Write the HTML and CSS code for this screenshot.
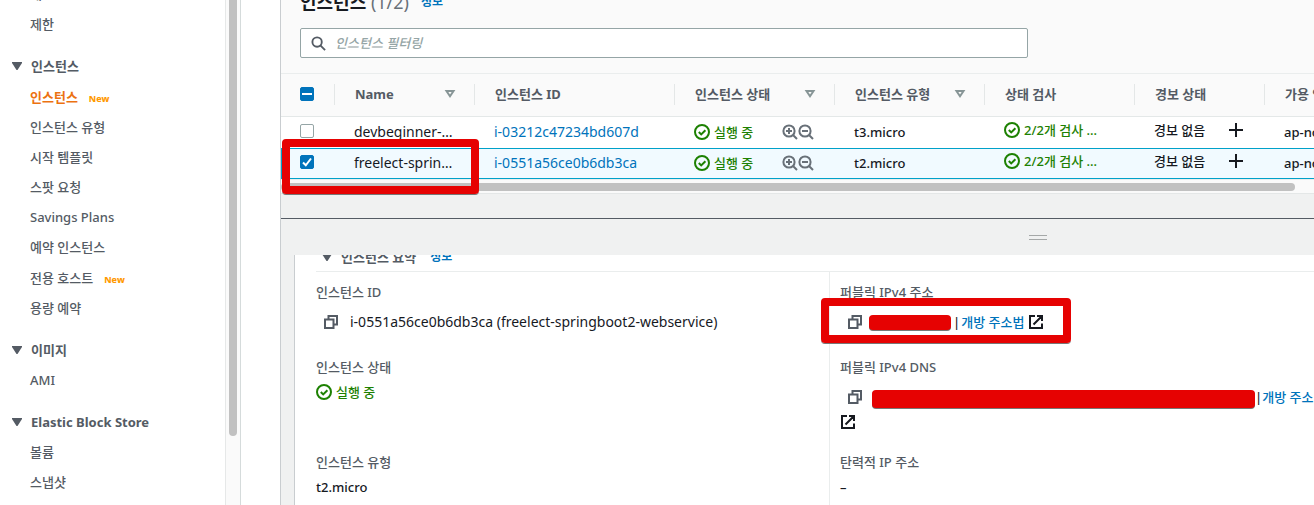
FILE: index.html
```html
<!DOCTYPE html>
<html lang="ko">
<head>
<meta charset="utf-8">
<title>인스턴스</title>
<link rel="stylesheet" href="styles.css">
</head>
<body>
<svg class="defs" aria-hidden="true">
  <symbol id="check" viewBox="0 0 16 16"><circle cx="8" cy="8" r="7"/><path d="M4.8 8l2.4 2.4 4.2-4.2"/></symbol>
  <symbol id="zoom-in" viewBox="0 0 16 16"><circle cx="7" cy="7" r="5.6"/><path d="M11 11l4 4M4 7h6M7 4v6"/></symbol>
  <symbol id="zoom-out" viewBox="0 0 16 16"><circle cx="7" cy="7" r="5.6"/><path d="M11 11l4 4M4 7h6"/></symbol>
  <symbol id="copy" viewBox="0 0 14 14"><path d="M1 4.500h8.500V13H1zM4.500 4V1H13v8.500h-3"/></symbol>
  <symbol id="external" viewBox="0 0 16 16"><path d="M7 2H2v12h12V9.500M9 2h5v5M14 2L5.500 10.500"/></symbol>
  <symbol id="plus" viewBox="0 0 16 16"><path d="M8 1v14M1 8h14"/></symbol>
  <symbol id="sort" viewBox="0 0 12 10"><path d="M2.500 2h7L6 7.200z"/></symbol>
  <symbol id="caret" viewBox="0 0 10 8"><path d="M0 0h10v1L5.500 8h-1L0 1z"/></symbol>
</svg>

<div class="console">
  <nav class="sidebar" aria-label="EC2">
    <div class="menu">
      <a class="item" href="#">태그</a>
      <a class="item" href="#">제한</a>

      <button class="section" type="button"><svg class="caret"><use href="#caret"/></svg>인스턴스</button>
      <a class="item tall active" href="#">인스턴스 <span class="new">New</span></a>
      <a class="item" href="#">인스턴스 유형</a>
      <a class="item" href="#">시작 템플릿</a>
      <a class="item" href="#">스팟 요청</a>
      <a class="item" href="#">Savings Plans</a>
      <a class="item" href="#">예약 인스턴스</a>
      <a class="item tall" href="#">전용 호스트 <span class="new">New</span></a>
      <a class="item" href="#">용량 예약</a>

      <button class="section" type="button"><svg class="caret"><use href="#caret"/></svg>이미지</button>
      <a class="item" href="#">AMI</a>

      <button class="section" type="button"><svg class="caret"><use href="#caret"/></svg>Elastic Block Store</button>
      <a class="item" href="#">볼륨</a>
      <a class="item" href="#">스냅샷</a>
    </div>
    <div class="vtrack"><div class="vthumb"></div></div>
  </nav>

  <main class="main">
    <section class="instances">
      <header class="title-row">
        <h1 class="title">인스턴스 <span class="count">(1/2)</span></h1>
        <a class="info" href="#">정보</a>
      </header>
      <label class="search">
        <svg class="search-icon" viewBox="0 0 16 16"><circle cx="6.500" cy="6.500" r="5"/><path d="M10 10l5 5"/></svg>
        <input type="text" placeholder="인스턴스 필터링" aria-label="인스턴스 필터링">
      </label>
      <div class="table-wrap">
        <table class="table">
          <colgroup>
            <col class="c-check"><col class="c-name"><col class="c-id"><col class="c-state"><col class="c-type"><col class="c-status"><col class="c-alarm"><col class="c-zone">
          </colgroup>
          <thead>
            <tr>
              <th><span class="cell"><input class="box mixed" type="checkbox" aria-label="모두 선택"></span></th>
              <th><span class="cell">Name <svg class="sort"><use href="#sort"/></svg></span></th>
              <th><span class="cell">인스턴스 ID</span></th>
              <th><span class="cell">인스턴스 상태 <svg class="sort"><use href="#sort"/></svg></span></th>
              <th><span class="cell">인스턴스 유형 <svg class="sort"><use href="#sort"/></svg></span></th>
              <th><span class="cell">상태 검사</span></th>
              <th><span class="cell">경보 상태</span></th>
              <th><span class="cell">가용 영역</span></th>
            </tr>
          </thead>
          <tbody>
            <tr>
              <td class="pick"><input class="box" type="checkbox" aria-label="devbeginner"></td>
              <td class="latin">devbeginner-…</td>
              <td class="latin"><a class="link" href="#">i-03212c47234bd607d</a></td>
              <td><div class="state"><svg class="check"><use href="#check"/></svg><span class="ok">실행 중</span><span class="zooms"><svg class="zoom"><use href="#zoom-in"/></svg><svg class="zoom"><use href="#zoom-out"/></svg></span></div></td>
              <td>t3.micro</td>
              <td class="raised"><div class="state"><svg class="check"><use href="#check"/></svg><span class="ok">2/2개 검사 …</span></div></td>
              <td class="raised"><div class="alarm">경보 없음<button class="add" type="button" aria-label="경보 추가"><svg class="plus"><use href="#plus"/></svg></button></div></td>
              <td>ap-northeast-2c</td>
            </tr>
            <tr class="selected">
              <td class="pick"><input class="box" type="checkbox" checked aria-label="freelect-springboot2-webservice"></td>
              <td class="latin">freelect-sprin…</td>
              <td class="latin"><a class="link" href="#">i-0551a56ce0b6db3ca</a></td>
              <td><div class="state"><svg class="check"><use href="#check"/></svg><span class="ok">실행 중</span><span class="zooms"><svg class="zoom"><use href="#zoom-in"/></svg><svg class="zoom"><use href="#zoom-out"/></svg></span></div></td>
              <td>t2.micro</td>
              <td class="raised"><div class="state"><svg class="check"><use href="#check"/></svg><span class="ok">2/2개 검사 …</span></div></td>
              <td class="raised"><div class="alarm">경보 없음<button class="add" type="button" aria-label="경보 추가"><svg class="plus"><use href="#plus"/></svg></button></div></td>
              <td>ap-northeast-2c</td>
            </tr>
          </tbody>
        </table>
      </div>
      <div class="htrack"><div class="hthumb"></div></div>
      <div class="marker row-marker"></div>
    </section>

    <section class="split">
      <div class="splitbar"><span class="grip"></span></div>
      <div class="details">
        <div class="details-head">
          <button class="summary" type="button"><svg class="caret"><use href="#caret"/></svg>인스턴스 요약</button>
          <a class="info" href="#">정보</a>
        </div>
        <dl class="fields">
          <div class="field">
            <dt>인스턴스 ID</dt>
            <dd class="copyable"><svg class="copy"><use href="#copy"/></svg><span class="latin">i-0551a56ce0b6db3ca (freelect-springboot2-webservice)</span></dd>
          </div>
          <div class="field right">
            <dt>퍼블릭 IPv4 주소</dt>
            <dd class="copyable"><svg class="copy"><use href="#copy"/></svg><span class="hidden-ip"></span><span class="bar">|</span><a class="link" href="#">개방 주소법</a><svg class="external"><use href="#external"/></svg></dd>
            <dd class="marker ip-marker"></dd>
          </div>
          <div class="field">
            <dt>인스턴스 상태</dt>
            <dd><div class="state"><svg class="check"><use href="#check"/></svg><span class="ok">실행 중</span></div></dd>
          </div>
          <div class="field right">
            <dt>퍼블릭 IPv4 DNS</dt>
            <dd class="copyable"><svg class="copy"><use href="#copy"/></svg><span class="hidden-dns"></span><span class="bar">|</span><a class="link" href="#">개방 주소법</a></dd>
            <dd class="wrapped"><svg class="external"><use href="#external"/></svg></dd>
          </div>
          <div class="field">
            <dt>인스턴스 유형</dt>
            <dd>t2.micro</dd>
          </div>
          <div class="field right">
            <dt>탄력적 IP 주소</dt>
            <dd>–</dd>
          </div>
        </dl>
      </div>
    </section>
  </main>
</div>
</body>
</html>
```
FILE: styles.css
```css
* { box-sizing: border-box; }

body {
  margin: 0;
  overflow: hidden;
  background: #fff;
  color: #16191f;
  font: 500 13px/20px "Noto Sans", "Noto Sans CJK KR", sans-serif;
}

button, input { font: inherit; color: inherit; }
button { border: 0; padding: 0; background: none; }
a { text-decoration: none; }
svg { flex: none; display: block; fill: none; }
.defs { position: absolute; width: 0; height: 0; }
.latin { font-size: 14px; font-weight: 400; }

.console { display: flex; height: 100vh; overflow: hidden; }

/* Sidebar */
.sidebar { display: flex; flex: none; width: 241px; margin-right: 39px; overflow: hidden; border-right: 1px solid #d5dbdb; }
.menu { flex: 1; margin-top: -21px; color: #545b64; }
.item { display: flex; align-items: center; height: 30px; padding-left: 30px; color: #545b64; }
.item.tall { height: 31px; }
.item.active { color: #ec7211; font-weight: 700; }
.new { margin: 4px 0 0 11px; color: #ff9900; font-size: 9px; font-weight: 800; }
.section { display: flex; align-items: center; gap: 9px; height: 30px; margin: 12px 0 0; padding-left: 12px; font-weight: 700; }
.caret { width: 10px; height: 8px; fill: #545b64; }
.vtrack { width: 15px; padding-left: 3px; border-left: 1px solid #e6e8e8; background: #fafafa; }
.vthumb { width: 8px; height: 436px; border-radius: 0 0 4px 4px; background: #c1c1c1; }

/* Instance list */
.main { flex: 1; min-width: 0; display: flex; flex-direction: column; border-left: 1px solid #c9cdd0; background: #f0f1f1; }
.instances { position: relative; flex: none; background: #fafafa; border-bottom: 1px solid #e4e7e7; }
.title-row { display: flex; align-items: center; gap: 12px; height: 28px; margin-top: -12px; padding-left: 19px; }
.title { margin: 0; font-size: 18px; line-height: 28px; }
.count { color: #687078; font-weight: 400; }
.info { color: #0073bb; font-size: 12px; font-weight: 700; }
.search { display: flex; align-items: center; width: 728px; height: 30px; margin: 12px 0 15px 19px; padding-left: 10px; border: 1px solid #95a5a6; border-radius: 2px; background: #fff; }
.search-icon { width: 15px; height: 15px; stroke: #545b64; stroke-width: 2; }
.search input { flex: 1; min-width: 0; margin-left: 9px; padding: 0; border: 0; outline: 0; background: none; }
.search input::placeholder { color: #95a5a6; font-style: italic; opacity: 1; }

.table-wrap { overflow: hidden; border-top: 1px solid #eaeded; }
.table { width: 1184px; table-layout: fixed; border-collapse: separate; border-spacing: 0; }
.c-check { width: 54px; }
.c-name { width: 140px; }
.c-id { width: 200px; }
.c-state { width: 160px; }
.c-type, .c-status { width: 150px; }
.c-alarm { width: 130px; }
.c-zone { width: 200px; }
th { height: 43px; padding: 0 0 2px; border-bottom: 1px solid #e4e8e8; color: #545b64; text-align: left; }
.cell { display: flex; align-items: center; justify-content: space-between; height: 21px; padding: 0 18px 0 20px; border-right: 1px solid #e4e7e7; }
.sort { width: 12px; height: 10px; stroke: #879596; stroke-width: 2; }
td { height: 31px; padding: 0 0 2px 19px; background: #fff; white-space: nowrap; }
.pick { padding-bottom: 4px; }
.raised { padding-bottom: 6px; }
.selected td { background: #f1faff; border-top: 1px solid #00a1c9; border-bottom: 1px solid #00a1c9; }
.selected .pick { border-left: 1px solid #00a1c9; padding-left: 18px; }
.link { color: #0073bb; }

.box { appearance: none; display: block; width: 14px; height: 14px; margin: 0; border: 1px solid #95a5a6; border-radius: 2px; background: #fff center no-repeat; }
th:first-child .cell { padding-left: 19px; }
.box:checked, .box.mixed { border-color: #0073bb; background-color: #0073bb; }
.box:checked { background-image: url("data:image/svg+xml,%3Csvg xmlns='http://www.w3.org/2000/svg' width='12' height='12' fill='none' stroke='white' stroke-width='2'%3E%3Cpath d='M2 6.500l2.800 2.800L10 2.500'/%3E%3C/svg%3E"); }
.box.mixed { background-image: linear-gradient(#fff, #fff); background-size: 10px 2px; }

.state { display: flex; align-items: center; gap: 4px; }
.check { width: 16px; height: 16px; stroke: #1d8102; stroke-width: 2; }
.ok { color: #1d8102; }
.zooms { display: flex; margin-left: 25px; }
.zoom { width: 16px; height: 16px; stroke: #687078; stroke-width: 2; }
.alarm { display: flex; align-items: center; gap: 23px; }
.plus { width: 16px; height: 16px; stroke: #16191f; stroke-width: 2; }

.htrack { height: 14px; padding-top: 3px; border-top: 1px solid #eaeded; }
.hthumb { width: 1014px; height: 8px; border-radius: 4px; background: #c1c1c1; }

.marker { position: absolute; border: 8px solid #e60202; border-radius: 4px; box-shadow: 0 1px 0 #777; }
.row-marker { left: 1px; top: 139px; width: 197px; height: 55px; }

/* Split panel */
.split { flex: 1; min-height: 0; margin-top: 24px; border-top: 1px solid #545b64; display: flex; flex-direction: column; }
.splitbar { flex: none; height: 36px; padding: 16px 0 0 748px; }
.grip { display: block; width: 18px; height: 5px; border: solid #a5a8a8; border-width: 1px 0; }
.details { flex: 1; min-height: 0; margin-left: 13px; padding-left: 21px; overflow: hidden; border-left: 1px solid #c9cdd0; background: #fff; }
.details-head { display: flex; align-items: center; gap: 14px; height: 29px; margin-top: -12px; padding-left: 6px; border-bottom: 1px solid #eaeded; }
.summary { display: flex; align-items: center; gap: 9px; color: #545b64; font-weight: 700; }
.fields { display: grid; grid-template-columns: 513px 513px; margin: 0; }
.field { position: relative; padding: 10px 0; white-space: nowrap; }
.field.right { padding-left: 10px; border-left: 1px solid #eaeded; }
dt { color: #545b64; }
dd { margin: 5px 0 0; }
.copyable { display: flex; align-items: center; height: 30px; padding-left: 8px; }
.copy { width: 14px; height: 14px; margin-right: 12px; stroke: #545b64; stroke-width: 2; }
.right .copy { margin-right: 7px; }
.external { width: 16px; height: 16px; stroke: #16191f; stroke-width: 2; }
.copyable .external { margin-left: 4px; }
.bar { margin: 0 1px 0 2px; }
.hidden-ip, .hidden-dns { border-radius: 4px; background: #e60202; box-shadow: 0 1px 0 #777; }
.hidden-ip { width: 82px; height: 15px; }
.hidden-dns { width: 383px; height: 18px; margin: 3px 0 0 3px; }
.hidden-dns + .bar { margin: 0; }
.wrapped { display: flex; align-items: center; height: 20px; margin: 0; }
.ip-marker { left: -9px; top: 26px; width: 250px; height: 45px; margin: 0; }
```
